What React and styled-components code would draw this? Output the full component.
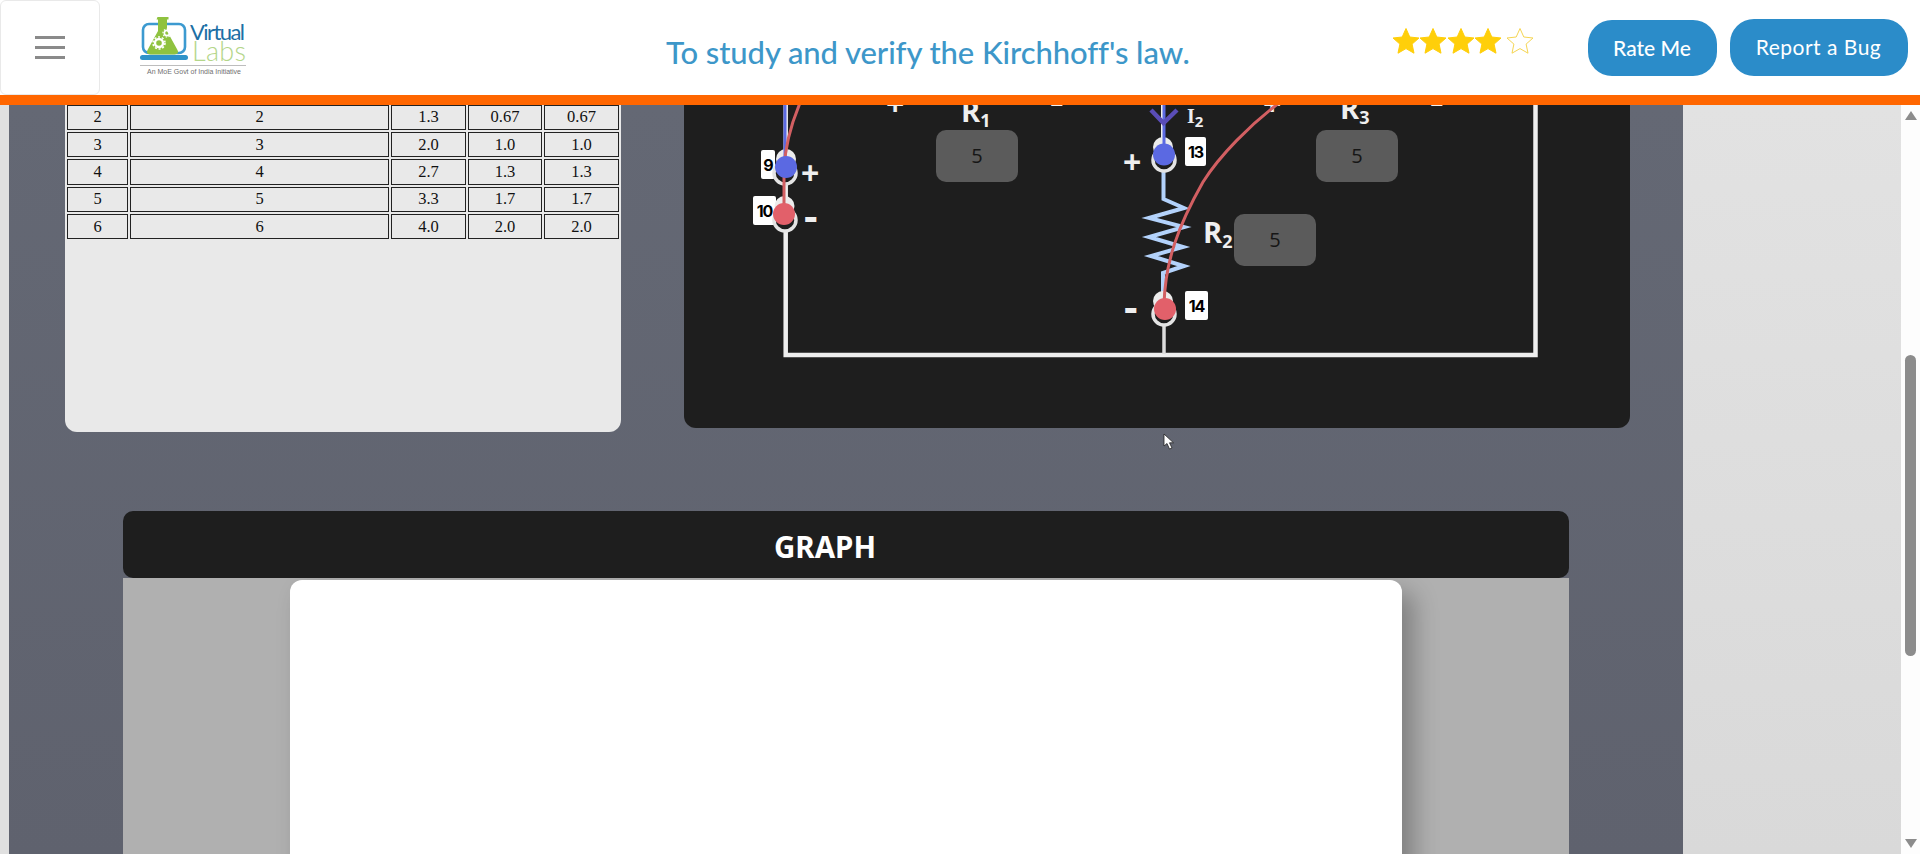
import React from 'react';
import styled, { createGlobalStyle } from 'styled-components';

// circuit coordinates below are page pixels, the panel starts at 684,105
const OX = 684;
const OY = 105;

const rows = [
    ['2', '2', '1.3', '0.67', '0.67'],
    ['3', '3', '2.0', '1.0', '1.0'],
    ['4', '4', '2.7', '1.3', '1.3'],
    ['5', '5', '3.3', '1.7', '1.7'],
    ['6', '6', '4.0', '2.0', '2.0'],
];

const columnWidths = [61, 259, 75, 74, 75];

const terminalTags = [
    { text: '9', x: 761, y: 150, w: 14, h: 29 },
    { text: '10', x: 753, y: 196, w: 23, h: 29 },
    { text: '13', x: 1185, y: 137, w: 21, h: 29 },
    { text: '14', x: 1185, y: 291, w: 23, h: 29 },
];

const signs = [
    { text: '+', x: 801, y: 153 },
    { text: '-', x: 804, y: 195 },
    { text: '+', x: 886, y: 84 },
    { text: '-', x: 1050, y: 79 },
    { text: '+', x: 1123, y: 142 },
    { text: '-', x: 1124, y: 286 },
    { text: '+', x: 1263, y: 84 },
    { text: '-', x: 1430, y: 79 },
];

const resistors = [
    { name: 'R', sub: '1', x: 961, y: 91, boxX: 936, boxY: 130 },
    { name: 'R', sub: '2', x: 1203, y: 212, boxX: 1234, boxY: 214 },
    { name: 'R', sub: '3', x: 1340, y: 88, boxX: 1316, boxY: 130 },
];

const terminals = [
    { top: [786, 159], ring: [785, 173], dot: [786, 167], color: '#5b69e2' },
    { top: [784.5, 206], ring: [785, 220], dot: [784, 214], color: '#e2606a' },
    { top: [1163, 147], ring: [1164, 160], dot: [1164, 154.5], color: '#5b69e2' },
    { top: [1163, 301], ring: [1164, 314], dot: [1165, 309], color: '#e2606a' },
];

const Star = ({ filled }) => (
    <StarIcon viewBox="0 0 28 28">
        <polygon
            points="14,1.5 17.8,10 27,11 20.1,17.1 22,26.2 14,21.6 6,26.2 7.9,17.1 1,11 10.2,10"
            fill={filled ? '#ffcf0a' : '#fff'}
            stroke={filled ? '#ffcf0a' : '#f5d552'}
            strokeWidth="1"
        />
    </StarIcon>
);

const Logo = () => (
    <LogoIcon viewBox="130 10 125 72">
        <rect x="143" y="24" width="42" height="29" rx="6" fill="#fff" stroke="#3c9ad0" strokeWidth="2.6" />
        <rect x="140" y="55" width="48" height="5" rx="2.5" fill="#2f93c9" />
        <path d="M157.500 17h11v2.500h-1.500v11.500l10.500 19q2 4-3 4.500h-24q-5-.5-3-4.500l10.500-19v-11.500h-1.500z" fill="#8fc23f" />
        <circle cx="159" cy="43" r="4" fill="none" stroke="#fff" strokeWidth="2.400" />
        <circle cx="159" cy="43" r="6" fill="none" stroke="#fff" strokeWidth="1.600" strokeDasharray="2 1.800" />
        <circle cx="167" cy="33" r="2.600" fill="none" stroke="#fff" strokeWidth="1.600" />
        <circle cx="167" cy="33" r="4" fill="none" stroke="#fff" strokeWidth="1.200" strokeDasharray="1.500 1.500" />
        <text x="190" y="40" fontFamily="Lato, sans-serif" fontSize="22" fill="#1d6fa5" textLength="55">Virtual</text>
        <text x="192" y="60.500" fontFamily="Lato, sans-serif" fontWeight="300" fontSize="27" fill="#b4d68a" textLength="54">Labs</text>
        <line x1="140" y1="65.500" x2="246" y2="65.500" stroke="#bdbdbd" strokeWidth="1" />
        <text x="147" y="74" fontFamily="'Liberation Sans', sans-serif" fontSize="7" fill="#6f6f6f" textLength="94">An MoE Govt of India Initiative</text>
    </LogoIcon>
);

const CircuitWires = () => (
    <WireLayer viewBox={`${OX} ${OY} 946 322.5`}>
        {/* outer loop */}
        <path d="M785.700 105V355H1535.500V105" fill="none" stroke="#eeeeee" strokeWidth="4.500" />
        <path d="M1163 105V150" fill="none" stroke="#eeeeee" strokeWidth="4" />
        <path d="M1164 325V354" fill="none" stroke="#dddddd" strokeWidth="3.500" />

        {/* middle branch resistor */}
        <path
            d="M1163.500 172V199L1184 208L1149 218L1184 227L1149 237L1183 247L1151 256L1184 266L1163 273V295"
            fill="none"
            stroke="#b3d2fb"
            strokeWidth="4"
        />

        {terminals.map((t) => (
            <g key={t.dot[1]}>
                <circle cx={t.top[0]} cy={t.top[1]} r="10" fill="#ececec" />
                <circle cx={t.ring[0]} cy={t.ring[1]} r="11" fill="#1e1e1e" stroke="#e4e4e4" strokeWidth="3.500" />
            </g>
        ))}

        {/* patch wires */}
        <path d="M785 105V165" fill="none" stroke="#5b69e2" strokeWidth="3" />
        <path d="M1164 105V150" fill="none" stroke="#5b69e2" strokeWidth="3" />
        <path d="M784 214V170C785 145 792 122 800 103" fill="none" stroke="#d25f62" strokeWidth="3" />
        <path d="M1164 305C1165 262 1178 226 1203 182C1220 155 1250 125 1279 103" fill="none" stroke="#d25f62" strokeWidth="3" />
        <path d="M1151 110L1163.500 123L1177 110" fill="none" stroke="#5a4db8" strokeWidth="4.500" />

        {terminals.map((t) => (
            <circle key={t.dot[1]} cx={t.dot[0]} cy={t.dot[1]} r="11" fill={t.color} />
        ))}
    </WireLayer>
);

const App = () => {
    return (
        <>
            <GlobalStyle />
            <StyledPage>
                <StyledHeader>
                    <StyledMenuButton>
                        <StyledMenuLine />
                        <StyledMenuLine />
                        <StyledMenuLine />
                    </StyledMenuButton>
                    <Logo />
                    <StyledTitle>To study and verify the Kirchhoff's law.</StyledTitle>
                    <StyledStars>
                        {[1, 2, 3, 4, 5].map((n) => <Star key={n} filled={n < 5} />)}
                    </StyledStars>
                    <StyledRateButton>Rate Me</StyledRateButton>
                    <StyledBugButton>Report a Bug</StyledBugButton>
                </StyledHeader>

                <StyledBody>
                    <StyledLeftStrip />
                    <StyledMain>
                        <StyledExperimentRow>
                            <StyledTablePanel>
                                <StyledTable>
                                    <colgroup>
                                        {columnWidths.map((w, i) => <StyledCol key={i} $w={w} />)}
                                    </colgroup>
                                    <tbody>
                                        {rows.map((row) => (
                                            <tr key={row[0]}>
                                                {row.map((cell, i) => <StyledCell key={i}>{cell}</StyledCell>)}
                                            </tr>
                                        ))}
                                    </tbody>
                                </StyledTable>
                            </StyledTablePanel>

                            <StyledCircuitPanel>
                                {resistors.map((r) => (
                                    <React.Fragment key={r.sub}>
                                        <StyledResistorLabel $x={r.x - OX} $y={r.y - OY}>
                                            {r.name}<StyledSub>{r.sub}</StyledSub>
                                        </StyledResistorLabel>
                                        <StyledValueBox $x={r.boxX - OX} $y={r.boxY - OY}>5</StyledValueBox>
                                    </React.Fragment>
                                ))}
                                <StyledCurrentLabel>I<StyledCurrentSub>2</StyledCurrentSub></StyledCurrentLabel>
                                {signs.map((s) => (
                                    <StyledSign key={`${s.x}${s.y}`} $x={s.x - OX} $y={s.y - OY} $minus={s.text === '-'}>{s.text}</StyledSign>
                                ))}
                                {terminalTags.map((t) => (
                                    <StyledTag key={t.text} $x={t.x - OX} $y={t.y - OY} $w={t.w} $h={t.h}>{t.text}</StyledTag>
                                ))}
                                <CircuitWires />
                            </StyledCircuitPanel>
                        </StyledExperimentRow>

                        <StyledGraphCard>
                            <StyledGraphHeader>GRAPH</StyledGraphHeader>
                            <StyledGraphBody>
                                <StyledGraphCanvas />
                            </StyledGraphBody>
                        </StyledGraphCard>

                        <StyledCursor viewBox="0 0 12 17">
                            <path d="M1 1V13L4 10.500L6.500 16L9 15L6.500 9.800H10.500Z" fill="#fff" stroke="#222" strokeWidth="0.800" />
                        </StyledCursor>
                    </StyledMain>
                    <StyledSidePanel />
                    <StyledScrollTrack>
                        <StyledScrollArrow />
                        <StyledScrollThumb />
                        <StyledScrollArrow $down />
                    </StyledScrollTrack>
                </StyledBody>
            </StyledPage>
        </>
    );
};

export default App;

const GlobalStyle = createGlobalStyle`
    html, body {
        margin: 0;
        height: 100%;
        overflow: hidden;
    }
    * {
        box-sizing: border-box;
    }
`;

const StyledPage = styled.div`
    display: flex;
    flex-direction: column;
    height: 854px;
    width: 1920px;
    overflow: hidden;
`;

const StyledHeader = styled.header`
    display: flex;
    align-items: flex-start;
    flex: none;
    height: 105px;
    background-color: #fff;
    border-bottom: 10px solid #ff6600;
`;

const StyledMenuButton = styled.div`
    display: flex;
    flex-direction: column;
    align-items: center;
    justify-content: center;
    gap: 7px;
    flex: none;
    width: 100px;
    height: 95px;
    border: 1px solid #e9e9e9;
    border-radius: 6px;
`;

const StyledMenuLine = styled.span`
    width: 30px;
    height: 3px;
    background-color: #8a8a8a;
`;

const LogoIcon = styled.svg`
    flex: none;
    width: 125px;
    height: 72px;
    margin: 10px 0 0 30px;
`;

const StyledTitle = styled.h1`
    flex: none;
    width: 526px;
    margin: 30px 0 0 411px;
    font-family: Lato, sans-serif;
    font-size: 31px;
    line-height: 44px;
    font-weight: 500;
    letter-spacing: -0.08px;
    white-space: nowrap;
    color: #3d97c9;
`;

const StyledStars = styled.div`
    display: flex;
    flex: none;
    width: 143px;
    margin: 27px 0 0 199.5px;
`;

const StarIcon = styled.svg`
    flex: none;
    width: 28px;
    height: 28px;
    margin-right: -0.5px;

    &:last-child {
        margin-left: 4px;
    }
`;

const StyledRateButton = styled.button`
    flex: none;
    width: 129px;
    height: 56px;
    margin: 20px 0 0 53px;
    padding: 0 0 2px;
    border: none;
    border-radius: 24px;
    background-color: #2b8cc9;
    color: #fff;
    font-family: Lato, sans-serif;
    font-size: 21px;
    font-weight: 500;
`;

const StyledBugButton = styled(StyledRateButton)`
    width: 178px;
    height: 57px;
    margin: 19px 0 0 13px;
    font-weight: 400;
    letter-spacing: 0.5px;
`;

const StyledBody = styled.div`
    display: flex;
    flex: 1;
    min-height: 0;
`;

const StyledLeftStrip = styled.div`
    flex: none;
    width: 9px;
    background-color: #e0e0e0;
`;

const StyledMain = styled.main`
    position: relative;
    flex: none;
    width: 1674px;
    overflow: hidden;
    background: linear-gradient(#646874, #5f626e);
`;

const StyledExperimentRow = styled.div`
    display: flex;
    align-items: flex-start;
    gap: 63px;
    padding-left: 56px;
`;

const StyledTablePanel = styled.div`
    flex: none;
    width: 556px;
    height: 327px;
    background-color: #e9e9e9;
    border-radius: 0 0 12px 12px;
    overflow: hidden;
`;

const StyledTable = styled.table`
    width: 556px;
    margin-top: -2.33px;
    table-layout: fixed;
    border-collapse: separate;
    border-spacing: 2px;
`;

const StyledCol = styled.col`
    width: ${(p) => p.$w}px;
`;

const StyledCell = styled.td`
    height: 25.33px;
    padding: 0;
    border: 1px solid #222;
    text-align: center;
    font-family: 'Liberation Serif', serif;
    font-size: 16.5px;
    line-height: 18px;
    color: #111;
`;

const StyledCircuitPanel = styled.div`
    position: relative;
    flex: none;
    width: 946px;
    height: 322.5px;
    background-color: #1e1e1e;
    border-radius: 0 0 12px 12px;
    overflow: hidden;
`;

const WireLayer = styled.svg`
    position: absolute;
    left: 0;
    top: 0;
    width: 946px;
    height: 322.5px;
`;

const StyledResistorLabel = styled.div`
    position: absolute;
    left: ${(p) => p.$x}px;
    top: ${(p) => p.$y}px;
    font-family: 'Open Sans', sans-serif;
    font-size: 29px;
    line-height: 40px;
    font-weight: 700;
    color: #efefef;
    white-space: nowrap;
`;

const StyledSub = styled.sub`
    font-size: 18px;
    line-height: 0;
    vertical-align: -5px;
`;

const StyledCurrentLabel = styled.div`
    position: absolute;
    left: ${1187 - OX}px;
    top: ${103 - OY}px;
    font-family: 'Liberation Serif', serif;
    font-size: 20px;
    line-height: 26px;
    font-weight: 700;
    color: #eeeeee;
`;

const StyledCurrentSub = styled.sub`
    font-family: 'Open Sans', sans-serif;
    font-size: 15px;
    font-weight: 700;
    line-height: 0;
    vertical-align: -4px;
`;

const StyledSign = styled.div`
    position: absolute;
    left: ${(p) => p.$x}px;
    top: ${(p) => p.$y}px;
    font-family: 'Open Sans', sans-serif;
    font-size: ${(p) => (p.$minus ? '42px' : '32px')};
    line-height: 40px;
    font-weight: 700;
    color: #efefef;
`;

const StyledTag = styled.div`
    position: absolute;
    left: ${(p) => p.$x}px;
    top: ${(p) => p.$y}px;
    display: flex;
    align-items: center;
    justify-content: center;
    width: ${(p) => p.$w}px;
    height: ${(p) => p.$h}px;
    background-color: #fff;
    border-radius: 2px;
    font-family: Inter, sans-serif;
    font-size: 16px;
    font-weight: 700;
    letter-spacing: -1px;
    color: #000;
`;

const StyledValueBox = styled.div`
    position: absolute;
    left: ${(p) => p.$x}px;
    top: ${(p) => p.$y}px;
    display: flex;
    align-items: center;
    justify-content: center;
    width: 82px;
    height: 52px;
    padding-bottom: 2px;
    background-color: #5b5b5b;
    border-radius: 10px;
    font-family: 'Open Sans', sans-serif;
    font-size: 20px;
    color: #161616;
`;

const StyledGraphCard = styled.section`
    width: 1446px;
    margin: 79px 0 0 114px;
`;

const StyledGraphHeader = styled.div`
    height: 67px;
    padding-right: 42px;
    background-color: #1e1e1e;
    border-radius: 10px;
    text-align: center;
    font-family: 'Noto Sans', sans-serif;
    font-size: 29.5px;
    line-height: 72px;
    font-weight: 700;
    color: #fff;
`;

const StyledGraphBody = styled.div`
    height: 300px;
    padding: 2px 0 0 167px;
    background-color: #b0b0b0;
    overflow: hidden;
`;

const StyledGraphCanvas = styled.div`
    width: 1112px;
    height: 400px;
    background-color: #fff;
    border-radius: 12px 12px 0 0;
    box-shadow: 12px 12px 24px rgba(0, 0, 0, 0.28);
`;

const StyledCursor = styled.svg`
    position: absolute;
    left: ${1163 - 9}px;
    top: ${433 - 105}px;
    width: 12px;
    height: 17px;
`;

const StyledSidePanel = styled.aside`
    flex: none;
    width: 218px;
    background: linear-gradient(#e2e2e2, #d9d9d9);
`;

const StyledScrollTrack = styled.div`
    display: flex;
    flex-direction: column;
    align-items: center;
    flex: none;
    width: 19px;
    padding-top: 6px;
    background-color: #fdfdfd;
`;

const StyledScrollArrow = styled.div`
    flex: none;
    width: 0;
    height: 0;
    margin-top: ${(p) => (p.$down ? '183px' : '0')};
    border-left: 6.5px solid transparent;
    border-right: 6.5px solid transparent;
    border-bottom: ${(p) => (p.$down ? '0' : '9px solid #8c8c8c')};
    border-top: ${(p) => (p.$down ? '9px solid #8c8c8c' : '0')};
`;

const StyledScrollThumb = styled.div`
    flex: none;
    width: 11px;
    height: 301px;
    margin-top: 235px;
    background-color: #8c8c8c;
    border-radius: 6px;
`;
